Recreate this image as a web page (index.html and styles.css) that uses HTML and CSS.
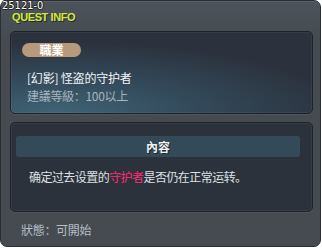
FILE: index.html
```html
<!DOCTYPE html>
<html lang="zh">
<head>
    <meta charset="UTF-8">
    <meta name="viewport" content="width=device-width, initial-scale=1.0">
    <title>Quest Info</title>
    <link rel="stylesheet" href="styles.css">
</head>
<body>
    <div class="window">
        <span class="quest-id">25121-0</span>
        <div class="window-title">QUEST INFO</div>

        <div class="panel panel-info">
            <span class="badge">職業</span>
            <div class="quest-name">[幻影]&nbsp;怪盗的守护者</div>
            <div class="quest-level">建議等級：100以上</div>
        </div>

        <div class="panel panel-content">
            <div class="panel-head">內容</div>
            <p class="quest-desc">确定过去设置的<span class="hl">守护者</span>是否仍在正常运转。</p>
        </div>

        <div class="quest-status">狀態：可開始</div>
    </div>
</body>
</html>
```

FILE: styles.css
```css
body {
    margin: 0;
    padding: 0;
    background: #ffffff;
    font-family: "Noto Sans CJK TC", "Noto Sans CJK SC", sans-serif;
}

.window {
    position: relative;
    box-sizing: border-box;
    width: 321px;
    height: 247px;
    border: 1px solid #2b2f34;
    border-radius: 7px;
    background: linear-gradient(#4c535a, #454b51 40px, #454b51);
    box-shadow: inset 0 1px 0 rgba(255, 255, 255, 0.08);
}

.quest-id {
    position: absolute;
    left: 1px;
    top: -1px;
    font-family: "Liberation Sans Narrow", "DejaVu Sans Condensed", sans-serif;
    font-size: 11px;
    line-height: 11px;
    color: #ffffff;
    text-shadow: 1px 0 0 #222, -1px 0 0 #222, 0 1px 0 #222, 0 -1px 0 #222;
}

.window-title {
    padding: 10px 0 0 11px;
    height: 20px;
    font-family: "Liberation Sans", Arial, sans-serif;
    font-weight: bold;
    font-size: 11px;
    line-height: 12px;
    letter-spacing: -0.4px;
    color: #d6ea3c;
    text-shadow: 1px 1px 0 #23272b;
}

.panel {
    box-sizing: border-box;
    width: 303px;
    margin-left: 9px;
    border: 1px solid #1e232a;
    border-radius: 5px;
    box-shadow: inset 0 0 0 1px rgba(255, 255, 255, 0.05), 0 1px 0 rgba(255, 255, 255, 0.06);
}

.panel-info {
    height: 83px;
    padding: 11px 0 0 11px;
    background: radial-gradient(ellipse 120% 110% at 15% 100%, #3f6475 0%, #33495a 40%, #2b323d 80%);
}

.badge {
    display: block;
    width: 59px;
    height: 14px;
    border-radius: 7px;
    background: #b79a7b;
    color: #ffffff;
    font-weight: bold;
    font-size: 12px;
    line-height: 14px;
    text-align: center;
}

.quest-name {
    margin-top: 12px;
    padding-left: 5px;
    font-size: 12px;
    line-height: 18px;
    letter-spacing: -0.2px;
    color: #f2f4f6;
}

.quest-level {
    padding-left: 5px;
    font-size: 12px;
    line-height: 18px;
    letter-spacing: -0.3px;
    color: #a9b3bc;
}

.panel-content {
    height: 90px;
    margin-top: 8px;
    padding: 13px 12px 0 5px;
    background: #2c323b;
}

.panel-head {
    height: 21px;
    border-radius: 3px;
    background: #344a58;
    color: #eef2f4;
    font-weight: bold;
    font-size: 12px;
    line-height: 21px;
    text-align: center;
    text-shadow: 1px 1px 0 #1c2228;
}

.quest-desc {
    margin: 11px 0 0 13px;
    font-size: 12px;
    line-height: 18px;
    letter-spacing: -0.55px;
    color: #dde1e5;
}

.hl {
    color: #ff2a78;
}

.quest-status {
    margin: 9px 0 0 20px;
    font-size: 12px;
    line-height: 18px;
    letter-spacing: -0.3px;
    color: #b6bec6;
}
```
